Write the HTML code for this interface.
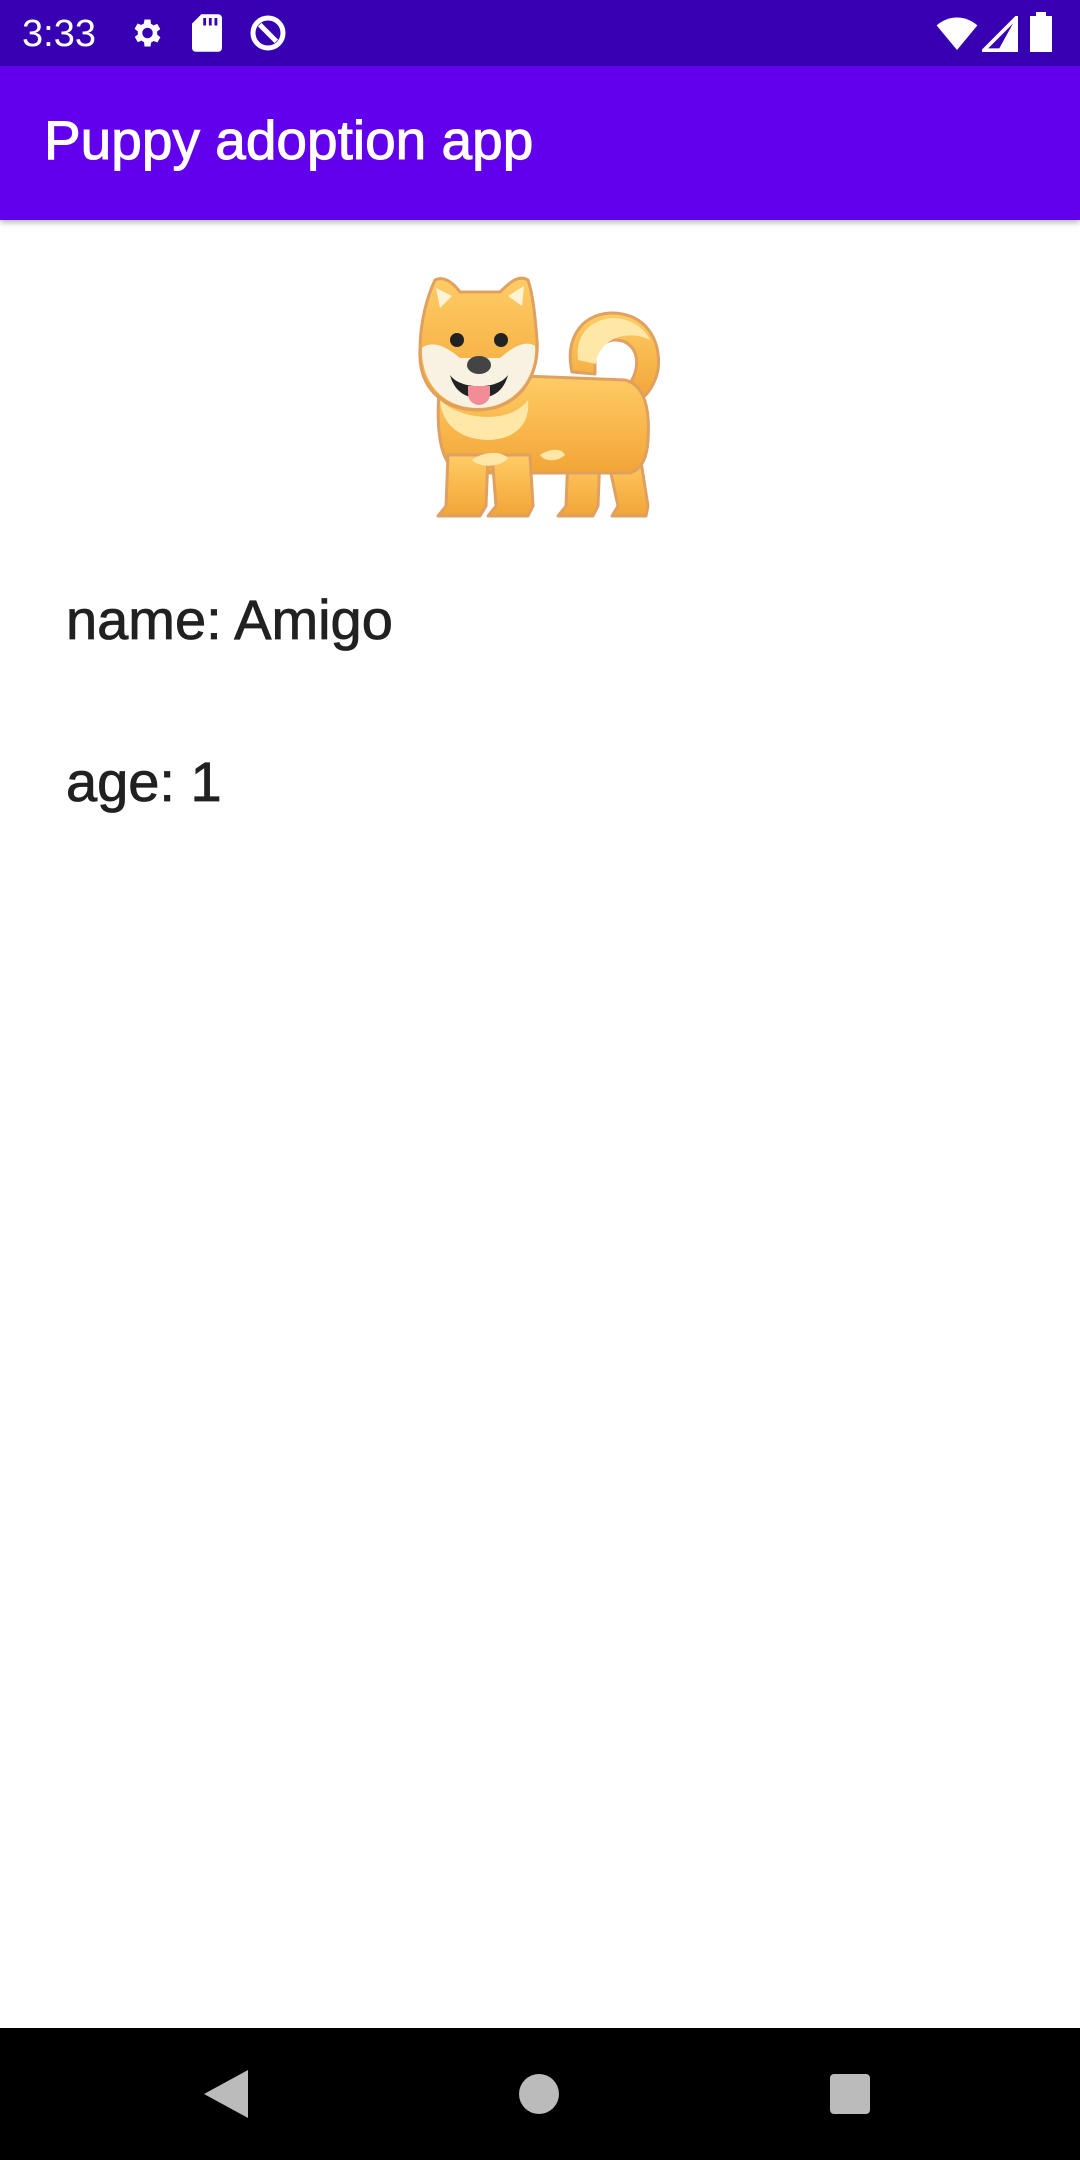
<!DOCTYPE html>
<html><head><meta charset="utf-8"><style>
html,body{margin:0;padding:0;width:1080px;height:2160px;background:#fff;overflow:hidden;font-family:"Liberation Sans",Roboto,sans-serif;position:relative}
.sb{position:absolute;left:0;top:0;width:1080px;height:66px;background:#3700B3}
.ab{position:absolute;left:0;top:66px;width:1080px;height:154px;background:#6200EE;box-shadow:0 3px 5px rgba(0,0,0,.25)}
.t{position:absolute;color:#fff;font-size:55px;left:44px;top:110px;line-height:60px;-webkit-text-stroke:1px #fff}
.txt{position:absolute;left:66px;font-size:56px;color:#212121;line-height:60px;-webkit-text-stroke:0.8px #212121}
.nav{position:absolute;left:0;top:2028px;width:1080px;height:132px;background:#000}
</style></head><body>
<div class="sb">
<div style="position:absolute;left:22px;top:12px;color:#fff;font-size:38px;line-height:44px">3:33</div>
<svg style="position:absolute;left:128px;top:15px" width="36" height="36" viewBox="0 0 24 24"><path fill="#fff" d="M19.4 13a7.5 7.5 0 000-2l2.1-1.6-2-3.5-2.5 1a7 7 0 00-1.7-1L15 3h-4l-.4 2.7a7 7 0 00-1.7 1l-2.5-1-2 3.5L6.6 11a7.5 7.5 0 000 2l-2.1 1.6 2 3.5 2.5-1a7 7 0 001.7 1L11 21h4l.4-2.7a7 7 0 001.7-1l2.5 1 2-3.5zM13 15.5a3.5 3.5 0 110-7 3.5 3.5 0 010 7z"/></svg>
<svg style="position:absolute;left:192px;top:14px" width="30" height="38" viewBox="0 0 16 20"><path fill="#fff" d="M5 0h9a2 2 0 012 2v16a2 2 0 01-2 2H2a2 2 0 01-2-2V5z"/><path fill="#3700B3" d="M6 2h1.5v4H6zM9 2h1.5v4H9zM12 2h1.5v4H12z"/></svg>
<svg style="position:absolute;left:248px;top:13px" width="40" height="40" viewBox="0 0 24 24"><circle cx="12" cy="12" r="9" fill="none" stroke="#fff" stroke-width="3"/><path d="M7 7l10 10" stroke="#fff" stroke-width="3"/></svg>
<svg style="position:absolute;left:936px;top:16px" width="42" height="34" viewBox="0 0 24 20"><path fill="#fff" d="M12 20L0 5.5A18 18 0 0124 5.5z"/></svg>
<svg style="position:absolute;left:982px;top:16px" width="36" height="36" viewBox="0 0 20 20"><path fill="none" stroke="#fff" stroke-width="2" d="M19 1v18H1z"/><path fill="#fff" d="M19 1v18H9z"/></svg>
<svg style="position:absolute;left:1030px;top:12px" width="22" height="40" viewBox="0 0 11 20"><path fill="#fff" d="M3 0h5v2h3v18H0V2h3z"/></svg>
</div>
<div class="ab"></div>
<div class="t">Puppy adoption app</div>

<svg style="position:absolute;left:400px;top:260px" width="280" height="280" viewBox="0 0 280 280">
<defs><linearGradient id="g" x1="0" y1="0" x2="0" y2="1"><stop offset="0" stop-color="#FFCC66"/><stop offset="1" stop-color="#F2A536"/></linearGradient></defs>
<g stroke="#E0A060" stroke-width="3" stroke-linejoin="round">
<!-- tail -->
<path fill="url(#g)" d="M172 112C165 80 180 55 210 53C245 52 262 80 258 110C255 125 247 135 240 140L228 126C240 110 240 90 225 82C210 76 195 85 195 100L195 114Z"/>
<path fill="#FFE7A8" stroke="none" d="M178 100C175 75 190 60 212 58C230 58 245 68 250 80C235 72 215 75 205 85C198 92 196 100 196 104Z"/>
<!-- back legs -->
<path fill="url(#g)" d="M168 195L166 246L158 256L193 256L198 246L200 195Z"/>
<path fill="url(#g)" d="M207 195L218 246L212 256L246 256L248 246L240 195Z"/>
<!-- body -->
<path fill="url(#g)" d="M40 120C60 115 100 115 150 117L225 120C245 125 250 150 248 180C247 200 240 210 230 213L60 213C40 205 35 170 40 120Z"/>
<!-- front legs -->
<path fill="url(#g)" d="M48 195L46 246L38 256L80 256L86 246L88 195Z"/>
<path fill="url(#g)" d="M92 195L96 246L88 256L128 256L133 246L130 195Z"/>
<path fill="#FFE7A8" stroke="none" d="M72 200C82 192 100 190 108 198C100 208 80 208 72 200ZM140 195C150 188 162 188 165 195C157 202 145 202 140 195Z"/>
<path fill="#FFE7A8" stroke="none" d="M40 140C60 160 110 165 128 140C130 160 120 178 90 180C60 180 42 165 40 140Z"/>
<!-- head -->
<path fill="url(#g)" d="M35 20C45 15 55 25 60 32L100 32C108 24 118 14 128 20C133 35 135 55 137 80C140 120 115 150 78 150C40 150 18 125 20 90C20 60 28 35 35 20Z"/>
<path fill="#FFF3D6" stroke="none" d="M36 28L52 36L40 48ZM124 26L108 36L122 46Z"/>
<path fill="#F8F2E2" stroke="none" d="M22 88C32 80 46 86 60 98L100 98C114 86 126 80 135 86C137 118 114 148 78 148C42 148 21 122 22 88Z"/>
</g>
<circle cx="57" cy="80" r="7" fill="#222"/><circle cx="101" cy="80" r="7" fill="#222"/>
<ellipse cx="79" cy="105" rx="12" ry="9" fill="#444"/>
<path d="M50 115C60 130 98 130 108 115C104 130 94 138 79 138S54 130 50 115Z" fill="#222"/>
<path d="M68 126H90V134A11 11 0 0168 134Z" fill="#F28C96"/>
</svg>

<div class="txt" style="top:590px">name: Amigo</div>
<div class="txt" style="top:752px">age: 1</div>

<div class="nav">
<svg style="position:absolute;left:204px;top:42px" width="44" height="48" viewBox="0 0 22 24"><path fill="#bbb" d="M22 0v24L0 12z"/></svg>
<div style="position:absolute;left:519px;top:46px;width:40px;height:40px;border-radius:50%;background:#bbb"></div>
<div style="position:absolute;left:830px;top:46px;width:40px;height:40px;border-radius:4px;background:#bbb"></div>
</div>
</body></html>
